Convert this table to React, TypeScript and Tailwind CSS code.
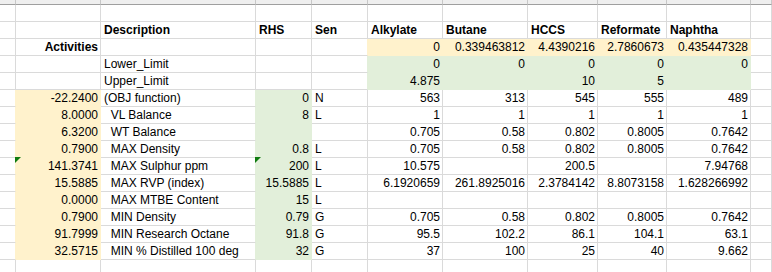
import clsx from "clsx";

type Fill = "y" | "g";
type Cell = { t?: string; r?: boolean; b?: boolean; f?: Fill; tri?: boolean };

const fillClass: Record<Fill, string> = {
    y: "bg-[#fff2cc] border-[#fff2cc]",
    g: "bg-[#e2efda] border-[#e2efda]",
};

const rightEdge: Record<Fill, string> = {
    y: "border-r-[#fff2cc]",
    g: "border-r-[#e2efda]",
};

const L = (t: string, extra: Partial<Cell> = {}): Cell => ({ t, ...extra });
const R = (t: string, extra: Partial<Cell> = {}): Cell => ({ t, r: true, ...extra });

const dataRow = (
    act: string,
    desc: string,
    rhs: string,
    sen: string,
    vals: string[],
    tri = false
): Cell[] => [
    {},
    R(act, { f: "y", tri }),
    L(desc),
    R(rhs, { f: "g", tri }),
    L(sen),
    ...vals.map((v) => R(v)),
    {},
];

const empty = (): Cell[] => Array.from({ length: 11 }, () => ({}));

const rows: Cell[][] = [
    empty(),
    [
        {},
        {},
        L("Description", { b: true }),
        L("RHS", { b: true }),
        L("Sen", { b: true }),
        L("Alkylate", { b: true }),
        L("Butane", { b: true }),
        L("HCCS", { b: true }),
        L("Reformate", { b: true }),
        L("Naphtha", { b: true }),
        {},
    ],
    [
        {},
        R("Activities", { b: true }),
        {},
        {},
        {},
        ...["0", "0.339463812", "4.4390216", "2.7860673", "0.435447328"].map((v) => R(v, { f: "y" as Fill })),
        {},
    ],
    [
        {},
        {},
        L("Lower_Limit"),
        {},
        {},
        ...["0", "0", "0", "0", "0"].map((v) => R(v, { f: "g" as Fill })),
        {},
    ],
    [
        {},
        {},
        L("Upper_Limit"),
        {},
        {},
        ...["4.875", "", "10", "5", ""].map((v) => R(v, { f: "g" as Fill })),
        {},
    ],
    dataRow("-22.2400", "(OBJ function)", "0", "N", ["563", "313", "545", "555", "489"]),
    dataRow("8.0000", "  VL Balance", "8", "L", ["1", "1", "1", "1", "1"]),
    dataRow("6.3200", "  WT Balance", "", "", ["0.705", "0.58", "0.802", "0.8005", "0.7642"]),
    dataRow("0.7900", "  MAX Density", "0.8", "L", ["0.705", "0.58", "0.802", "0.8005", "0.7642"]),
    dataRow("141.3741", "  MAX Sulphur ppm", "200", "L", ["10.575", "", "200.5", "", "7.94768"], true),
    dataRow("15.5885", "  MAX RVP (index)", "15.5885", "L", ["6.1920659", "261.8925016", "2.3784142", "8.8073158", "1.628266992"]),
    dataRow("0.0000", "  MAX MTBE Content", "15", "L", ["", "", "", "", ""]),
    dataRow("0.7900", "  MIN Density", "0.79", "G", ["0.705", "0.58", "0.802", "0.8005", "0.7642"]),
    dataRow("91.7999", "  MIN Research Octane", "91.8", "G", ["95.5", "102.2", "86.1", "104.1", "63.1"]),
    dataRow("32.5715", "  MIN % Distilled 100 deg", "32", "G", ["37", "100", "25", "40", "9.662"]),
    empty(),
];

const SheetCell = ({ cell, next }: { cell: Cell; next?: Cell }) => {
    return (
        <div
            className={clsx(
                "relative h-[17px] border-r border-b whitespace-pre leading-[16px]",
                cell.r ? "text-right pr-[2px]" : "text-left pl-[3px]",
                cell.b && "font-bold",
                cell.f ? fillClass[cell.f] : "border-[#dadada]",
                !cell.f && next?.f && rightEdge[next.f]
            )}
        >
            {cell.t}
            {cell.tri && (
                <svg className="absolute -left-px -top-px" width="6" height="6" viewBox="0 0 6 6">
                    <polygon points="0,0 6,0 0,6" fill="#0f7b0f" />
                </svg>
            )}
        </div>
    );
};

const App = () => {
    return (
        <div
            className="w-[772px] h-[272px] overflow-hidden bg-white text-[12px] text-black"
            style={{ fontFamily: '"Liberation Sans", Arial, sans-serif' }}
        >
            <div className="grid grid-cols-[16px_85px_155px_56px_56px_75px_85px_70px_69px_84px_21px]">
                {/* column header strip, scrolled mostly out of view */}
                {Array.from({ length: 11 }).map((_, i) => (
                    <div
                        key={i}
                        className="h-[5px] bg-[#efefef] border-r border-b border-r-[#c8c8c8] border-b-[#9f9f9f]"
                    />
                ))}
                {rows.map((row, ri) =>
                    row.map((cell, ci) => (
                        <SheetCell key={`${ri}-${ci}`} cell={cell} next={row[ci + 1]} />
                    ))
                )}
            </div>
        </div>
    );
};

export default App;
